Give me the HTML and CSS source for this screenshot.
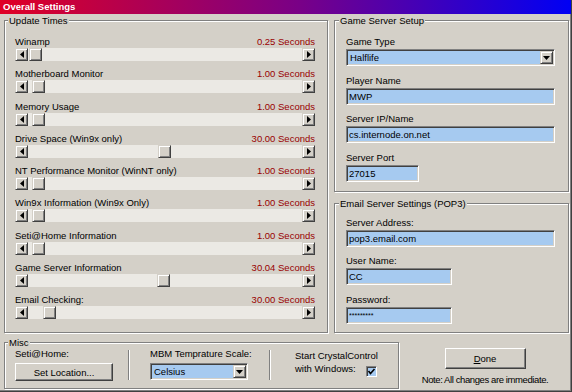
FILE: index.html
```html
<!DOCTYPE html>
<html lang="en">

<head>
  <meta charset="UTF-8" />
  <title>Overall Settings</title>
  <link rel="stylesheet" href="styles.css">
</head>

<body>
  <div class="window">
    <div class="titlebar">Overall Settings</div>

    <div class="client">
      <div class="top">
        <div class="group updates">
          <div class="group-title">Update Times</div>
          <div class="sliders">
            <div class="slider">
              <div class="slider-head"><span>Winamp</span><span class="value">0.25 Seconds</span></div>
              <div class="scrollbar">
                <span class="arrow"><svg width="4" height="7" viewBox="0 0 4 7"><polygon points="4,0 4,7 0,3.5" /></svg></span>
                <span class="track"><span class="thumb" style="margin-left: 1px"></span></span>
                <span class="arrow"><svg width="4" height="7" viewBox="0 0 4 7"><polygon points="0,0 0,7 4,3.5" /></svg></span>
              </div>
            </div>
            <div class="slider">
              <div class="slider-head"><span>Motherboard Monitor</span><span class="value">1.00 Seconds</span></div>
              <div class="scrollbar">
                <span class="arrow"><svg width="4" height="7" viewBox="0 0 4 7"><polygon points="4,0 4,7 0,3.5" /></svg></span>
                <span class="track"><span class="thumb" style="margin-left: 4px"></span></span>
                <span class="arrow"><svg width="4" height="7" viewBox="0 0 4 7"><polygon points="0,0 0,7 4,3.5" /></svg></span>
              </div>
            </div>
            <div class="slider">
              <div class="slider-head"><span>Memory Usage</span><span class="value">1.00 Seconds</span></div>
              <div class="scrollbar">
                <span class="arrow"><svg width="4" height="7" viewBox="0 0 4 7"><polygon points="4,0 4,7 0,3.5" /></svg></span>
                <span class="track"><span class="thumb" style="margin-left: 4px"></span></span>
                <span class="arrow"><svg width="4" height="7" viewBox="0 0 4 7"><polygon points="0,0 0,7 4,3.5" /></svg></span>
              </div>
            </div>
            <div class="slider">
              <div class="slider-head"><span>Drive Space (Win9x only)</span><span class="value">30.00 Seconds</span></div>
              <div class="scrollbar">
                <span class="arrow"><svg width="4" height="7" viewBox="0 0 4 7"><polygon points="4,0 4,7 0,3.5" /></svg></span>
                <span class="track"><span class="thumb" style="margin-left: 130px"></span></span>
                <span class="arrow"><svg width="4" height="7" viewBox="0 0 4 7"><polygon points="0,0 0,7 4,3.5" /></svg></span>
              </div>
            </div>
            <div class="slider">
              <div class="slider-head"><span>NT Performance Monitor (WinNT only)</span><span class="value">1.00 Seconds</span></div>
              <div class="scrollbar">
                <span class="arrow"><svg width="4" height="7" viewBox="0 0 4 7"><polygon points="4,0 4,7 0,3.5" /></svg></span>
                <span class="track"><span class="thumb" style="margin-left: 4px"></span></span>
                <span class="arrow"><svg width="4" height="7" viewBox="0 0 4 7"><polygon points="0,0 0,7 4,3.5" /></svg></span>
              </div>
            </div>
            <div class="slider">
              <div class="slider-head"><span>Win9x Information (Win9x Only)</span><span class="value">1.00 Seconds</span></div>
              <div class="scrollbar">
                <span class="arrow"><svg width="4" height="7" viewBox="0 0 4 7"><polygon points="4,0 4,7 0,3.5" /></svg></span>
                <span class="track"><span class="thumb" style="margin-left: 4px"></span></span>
                <span class="arrow"><svg width="4" height="7" viewBox="0 0 4 7"><polygon points="0,0 0,7 4,3.5" /></svg></span>
              </div>
            </div>
            <div class="slider">
              <div class="slider-head"><span>Seti@Home Information</span><span class="value">1.00 Seconds</span></div>
              <div class="scrollbar">
                <span class="arrow"><svg width="4" height="7" viewBox="0 0 4 7"><polygon points="4,0 4,7 0,3.5" /></svg></span>
                <span class="track"><span class="thumb" style="margin-left: 4px"></span></span>
                <span class="arrow"><svg width="4" height="7" viewBox="0 0 4 7"><polygon points="0,0 0,7 4,3.5" /></svg></span>
              </div>
            </div>
            <div class="slider">
              <div class="slider-head"><span>Game Server Information</span><span class="value">30.04 Seconds</span></div>
              <div class="scrollbar">
                <span class="arrow"><svg width="4" height="7" viewBox="0 0 4 7"><polygon points="4,0 4,7 0,3.5" /></svg></span>
                <span class="track"><span class="thumb" style="margin-left: 129px"></span></span>
                <span class="arrow"><svg width="4" height="7" viewBox="0 0 4 7"><polygon points="0,0 0,7 4,3.5" /></svg></span>
              </div>
            </div>
            <div class="slider">
              <div class="slider-head"><span>Email Checking:</span><span class="value">30.00 Seconds</span></div>
              <div class="scrollbar">
                <span class="arrow"><svg width="4" height="7" viewBox="0 0 4 7"><polygon points="4,0 4,7 0,3.5" /></svg></span>
                <span class="track"><span class="thumb" style="margin-left: 15px"></span></span>
                <span class="arrow"><svg width="4" height="7" viewBox="0 0 4 7"><polygon points="0,0 0,7 4,3.5" /></svg></span>
              </div>
            </div>
          </div>
        </div>

        <div class="side">
          <div class="group server">
            <div class="group-title">Game Server Setup</div>
            <div class="fields">
              <div class="field">
                <div class="label">Game Type</div>
                <div class="combo">
                  <span class="combo-text">Halflife</span>
                  <span class="combo-btn"><svg width="7" height="4" viewBox="0 0 7 4"><polygon points="0,0 7,0 3.5,4" /></svg></span>
                </div>
              </div>
              <div class="field">
                <div class="label">Player Name</div>
                <input class="edit" type="text" value="MWP">
              </div>
              <div class="field">
                <div class="label">Server IP/Name</div>
                <input class="edit" type="text" value="cs.internode.on.net">
              </div>
              <div class="field">
                <div class="label">Server Port</div>
                <input class="edit short" type="text" value="27015">
              </div>
            </div>
          </div>

          <div class="group email">
            <div class="group-title">Email Server Settings (POP3)</div>
            <div class="fields">
              <div class="field">
                <div class="label">Server Address:</div>
                <input class="edit" type="text" value="pop3.email.com">
              </div>
              <div class="field">
                <div class="label">User Name:</div>
                <input class="edit medium" type="text" value="CC">
              </div>
              <div class="field">
                <div class="label">Password:</div>
                <input class="edit medium pass" type="text" value="*********">
              </div>
            </div>
          </div>
        </div>
      </div>

      <div class="bottom">
        <div class="group misc">
          <div class="group-title">Misc</div>
          <div class="misc-row">
            <div class="misc-col seti">
              <div class="label">Seti@Home:</div>
              <button class="btn">Set Location...</button>
            </div>
            <div class="sep"></div>
            <div class="misc-col mbm">
              <div class="label">MBM Temprature Scale:</div>
              <div class="combo">
                <span class="combo-text">Celsius</span>
                <span class="combo-btn"><svg width="7" height="4" viewBox="0 0 7 4"><polygon points="0,0 7,0 3.5,4" /></svg></span>
              </div>
            </div>
            <div class="sep sep2"></div>
            <div class="misc-col startup">
              <div>Start CrystalControl</div>
              <div class="check-line">
                <span>with Windows:</span>
                <span class="check"><svg width="9" height="9" viewBox="0 0 9 9"><polyline points="1.5,4 3.5,6.5 7.5,2" /></svg></span>
              </div>
            </div>
          </div>
        </div>

        <div class="done-area">
          <button class="btn done"><u>D</u>one</button>
          <div class="note">Note: All changes are immediate.</div>
        </div>
      </div>
    </div>
  </div>
</body>

</html>
```

FILE: styles.css
```css
body {
  margin: 0;
  font-family: "Liberation Sans", Arial, sans-serif;
  font-size: 9.5px;
  color: #000;
  background: #d4d0c8;
}

.window {
  width: 572px;
  height: 392px;
  box-sizing: border-box;
  display: flex;
  flex-direction: column;
  background: #d4d0c8;
  border-right: 1px solid #404040;
  border-bottom: 1px solid #404040;
  box-shadow: inset -1px -1px #808080;
}

.titlebar {
  height: 14px;
  line-height: 14px;
  padding-left: 3px;
  color: #fff;
  font-weight: bold;
  background: linear-gradient(to right, #e00024, #7a0086 52%, #0000f4);
}

.client {
  flex: 1;
  padding: 6px 0 0 4px;
}

.top {
  display: flex;
  gap: 6px;
  height: 313px;
}

/* etched group box */
.group {
  box-sizing: border-box;
  display: flex;
  flex-direction: column;
  border: 1px solid #808080;
  box-shadow: inset 1px 1px #fff, 1px 1px #fff;
}

.group-title {
  align-self: flex-start;
  margin: -7px 0 0 -7px;
  padding: 0 1px;
  line-height: 13px;
  background: #d4d0c8;
}

.updates {
  width: 324px;
  padding: 0 12px 0 10px;
}

.sliders {
  display: grid;
  grid-auto-rows: 32.3px;
  margin-top: 8px;
}

.slider-head {
  display: flex;
  justify-content: space-between;
  line-height: 13px;
}

.value {
  color: #990000;
}

.scrollbar {
  display: flex;
  height: 13px;
}

.arrow,
.thumb,
.combo-btn {
  box-sizing: border-box;
  flex-shrink: 0;
  display: flex;
  align-items: center;
  justify-content: center;
  width: 13px;
  height: 13px;
  background: #d4d0c8;
  border: 1px solid;
  border-color: #d4d0c8 #404040 #404040 #d4d0c8;
  box-shadow: inset 1px 1px #fff, inset -1px -1px #808080;
}

.track {
  flex: 1;
  display: flex;
  background: #ebe9e4;
}

.side {
  width: 235px;
  display: flex;
  flex-direction: column;
  gap: 11px;
}

.server {
  height: 173px;
  padding: 0 13px 0 11px;
}

.email {
  flex: 1;
  padding: 0 13px 0 11px;
}

.server .fields {
  margin-top: 9px;
}

.email .fields {
  margin-top: 6.5px;
}

.field {
  margin-bottom: 8.5px;
}

.label {
  line-height: 11px;
  margin-bottom: 2px;
  white-space: nowrap;
}

.edit,
.combo {
  display: block;
  box-sizing: border-box;
  width: 100%;
  height: 17px;
  margin: 0;
  padding: 0 2px;
  font: inherit;
  color: #000;
  background: #a6caf0;
  border: 1px solid;
  border-color: #808080 #fff #fff #808080;
  box-shadow: inset 1px 1px #404040, inset -1px -1px #d4d0c8;
  outline: none;
}

.edit.short {
  width: 73px;
}

.edit.medium {
  width: 106px;
}

.edit.pass {
  font-size: 7px;
}

.combo {
  display: flex;
  align-items: center;
  padding: 1px;
}

.combo-text {
  flex: 1;
  padding-left: 2px;
}

.bottom {
  display: flex;
  margin-top: 9px;
}

.misc {
  width: 395px;
  height: 47px;
  padding-left: 10px;
}

.misc .group-title {
  margin-top: -6px;
  line-height: 11px;
}

.misc-row {
  display: flex;
  align-items: flex-start;
  margin-top: 0;
}

.misc-col {
  width: 98px;
}

.mbm {
  margin-left: 20px;
}

.mbm .label,
.seti .label {
  margin-bottom: 4px;
}

.btn {
  display: block;
  box-sizing: border-box;
  width: 100%;
  height: 18px;
  margin: 0;
  padding: 0;
  font: inherit;
  color: #000;
  background: #d4d0c8;
  border: 1px solid;
  border-color: #fff #404040 #404040 #fff;
  box-shadow: inset -1px -1px #808080;
}

.sep {
  width: 0;
  height: 30px;
  margin: 2px 0 0 15px;
  border-left: 1px solid #808080;
  border-right: 1px solid #fff;
}

.sep2 {
  margin-left: 21px;
}

.startup {
  width: auto;
  margin: 1px 0 0 24px;
  line-height: 13px;
}

.check-line {
  display: flex;
  align-items: flex-start;
  gap: 10px;
}

.check {
  box-sizing: border-box;
  display: flex;
  align-items: center;
  justify-content: center;
  width: 11px;
  height: 11px;
  margin-top: 4px;
  background: #a6caf0;
  border: 1px solid;
  border-color: #808080 #fff #fff #808080;
  box-shadow: inset 1px 1px #404040;
}

.check polyline {
  fill: none;
  stroke: #000;
  stroke-width: 1.6;
}

.done-area {
  flex: 1;
  display: flex;
  flex-direction: column;
  align-items: center;
  padding-top: 6px;
}

.btn.done {
  width: 81px;
  height: 21px;
}

.note {
  margin-top: 4px;
  line-height: 13px;
  letter-spacing: -0.4px;
}
```
